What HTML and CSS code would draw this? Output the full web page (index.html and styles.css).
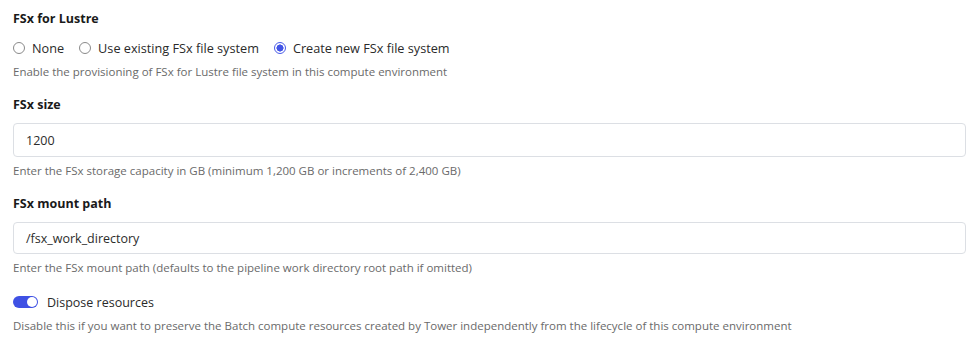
FILE: index.html
```html
<!DOCTYPE html>
<html>
<head>
<meta charset="utf-8">
<link rel="stylesheet" href="styles.css">
</head>
<body>
<form class="form">
  <div class="field">
    <div class="label">FSx for Lustre</div>
    <div class="radios">
      <label class="radio"><span class="dot"></span>None</label>
      <label class="radio"><span class="dot"></span>Use existing FSx file system</label>
      <label class="radio"><span class="dot checked"></span>Create new FSx file system</label>
    </div>
    <div class="help">Enable the provisioning of FSx for Lustre file system in this compute environment</div>
  </div>

  <div class="field">
    <div class="label">FSx size</div>
    <div class="input tall">1200</div>
    <div class="help">Enter the FSx storage capacity in GB (minimum 1,200 GB or increments of 2,400 GB)</div>
  </div>

  <div class="field">
    <div class="label">FSx mount path</div>
    <div class="input">/fsx_work_directory</div>
    <div class="help">Enter the FSx mount path (defaults to the pipeline work directory root path if omitted)</div>
  </div>

  <div class="field">
    <div class="toggle-row"><span class="toggle"><span class="knob"></span></span>Dispose resources</div>
    <div class="help">Disable this if you want to preserve the Batch compute resources created by Tower independently from the lifecycle of this compute environment</div>
  </div>
</form>
</body>
</html>
```
FILE: styles.css
```css
html, body {
  margin: 0;
  padding: 0;
  background: #ffffff;
}
body {
  font-family: "Open Sans", "Noto Sans", sans-serif;
  color: #222222;
}
.form {
  padding: 10px 9px 0 13px;
  display: flex;
  flex-direction: column;
}
.field {
  display: flex;
  flex-direction: column;
}
.field + .field {
  margin-top: 15px;
}
.label {
  font-size: 12.5px;
  font-weight: 700;
  line-height: 18px;
  color: #1a1a1a;
}
.radios {
  display: flex;
  align-items: center;
  margin-top: 10px;
  height: 20px;
  gap: 15px;
}
.radio {
  display: flex;
  align-items: center;
  gap: 7px;
  font-size: 12.7px;
  line-height: 20px;
  color: #2a2a2a;
}
.dot {
  width: 10px;
  height: 10px;
  border: 1px solid #8a8a8a;
  border-radius: 50%;
  box-sizing: content-box;
  background: #fff;
}
.dot.checked {
  border-color: #4a5ce8;
  background: radial-gradient(circle, #4254e6 0 3.3px, #ffffff 3.8px);
}
.help {
  margin-top: 5px;
  font-size: 11.5px;
  line-height: 18px;
  color: #6a6a6a;
}
.input {
  margin-top: 9px;
  height: 34px;
  box-sizing: border-box;
  border: 1px solid #dcdfe4;
  border-radius: 4px;
  padding: 0 12px;
  display: flex;
  align-items: center;
  font-size: 12.5px;
  color: #2c2c2c;
}
.input:not(.tall) {
  height: 32px;
}
.toggle-row {
  display: flex;
  align-items: center;
  gap: 9px;
  height: 20px;
  font-size: 12.5px;
  color: #2a2a2a;
}
.toggle {
  width: 25px;
  height: 12px;
  border-radius: 6px;
  background: #3f51e4;
  display: flex;
  align-items: center;
  justify-content: flex-end;
  padding: 0 1px;
  box-sizing: border-box;
}
.knob {
  width: 10px;
  height: 10px;
  border-radius: 50%;
  background: #ffffff;
}
```
